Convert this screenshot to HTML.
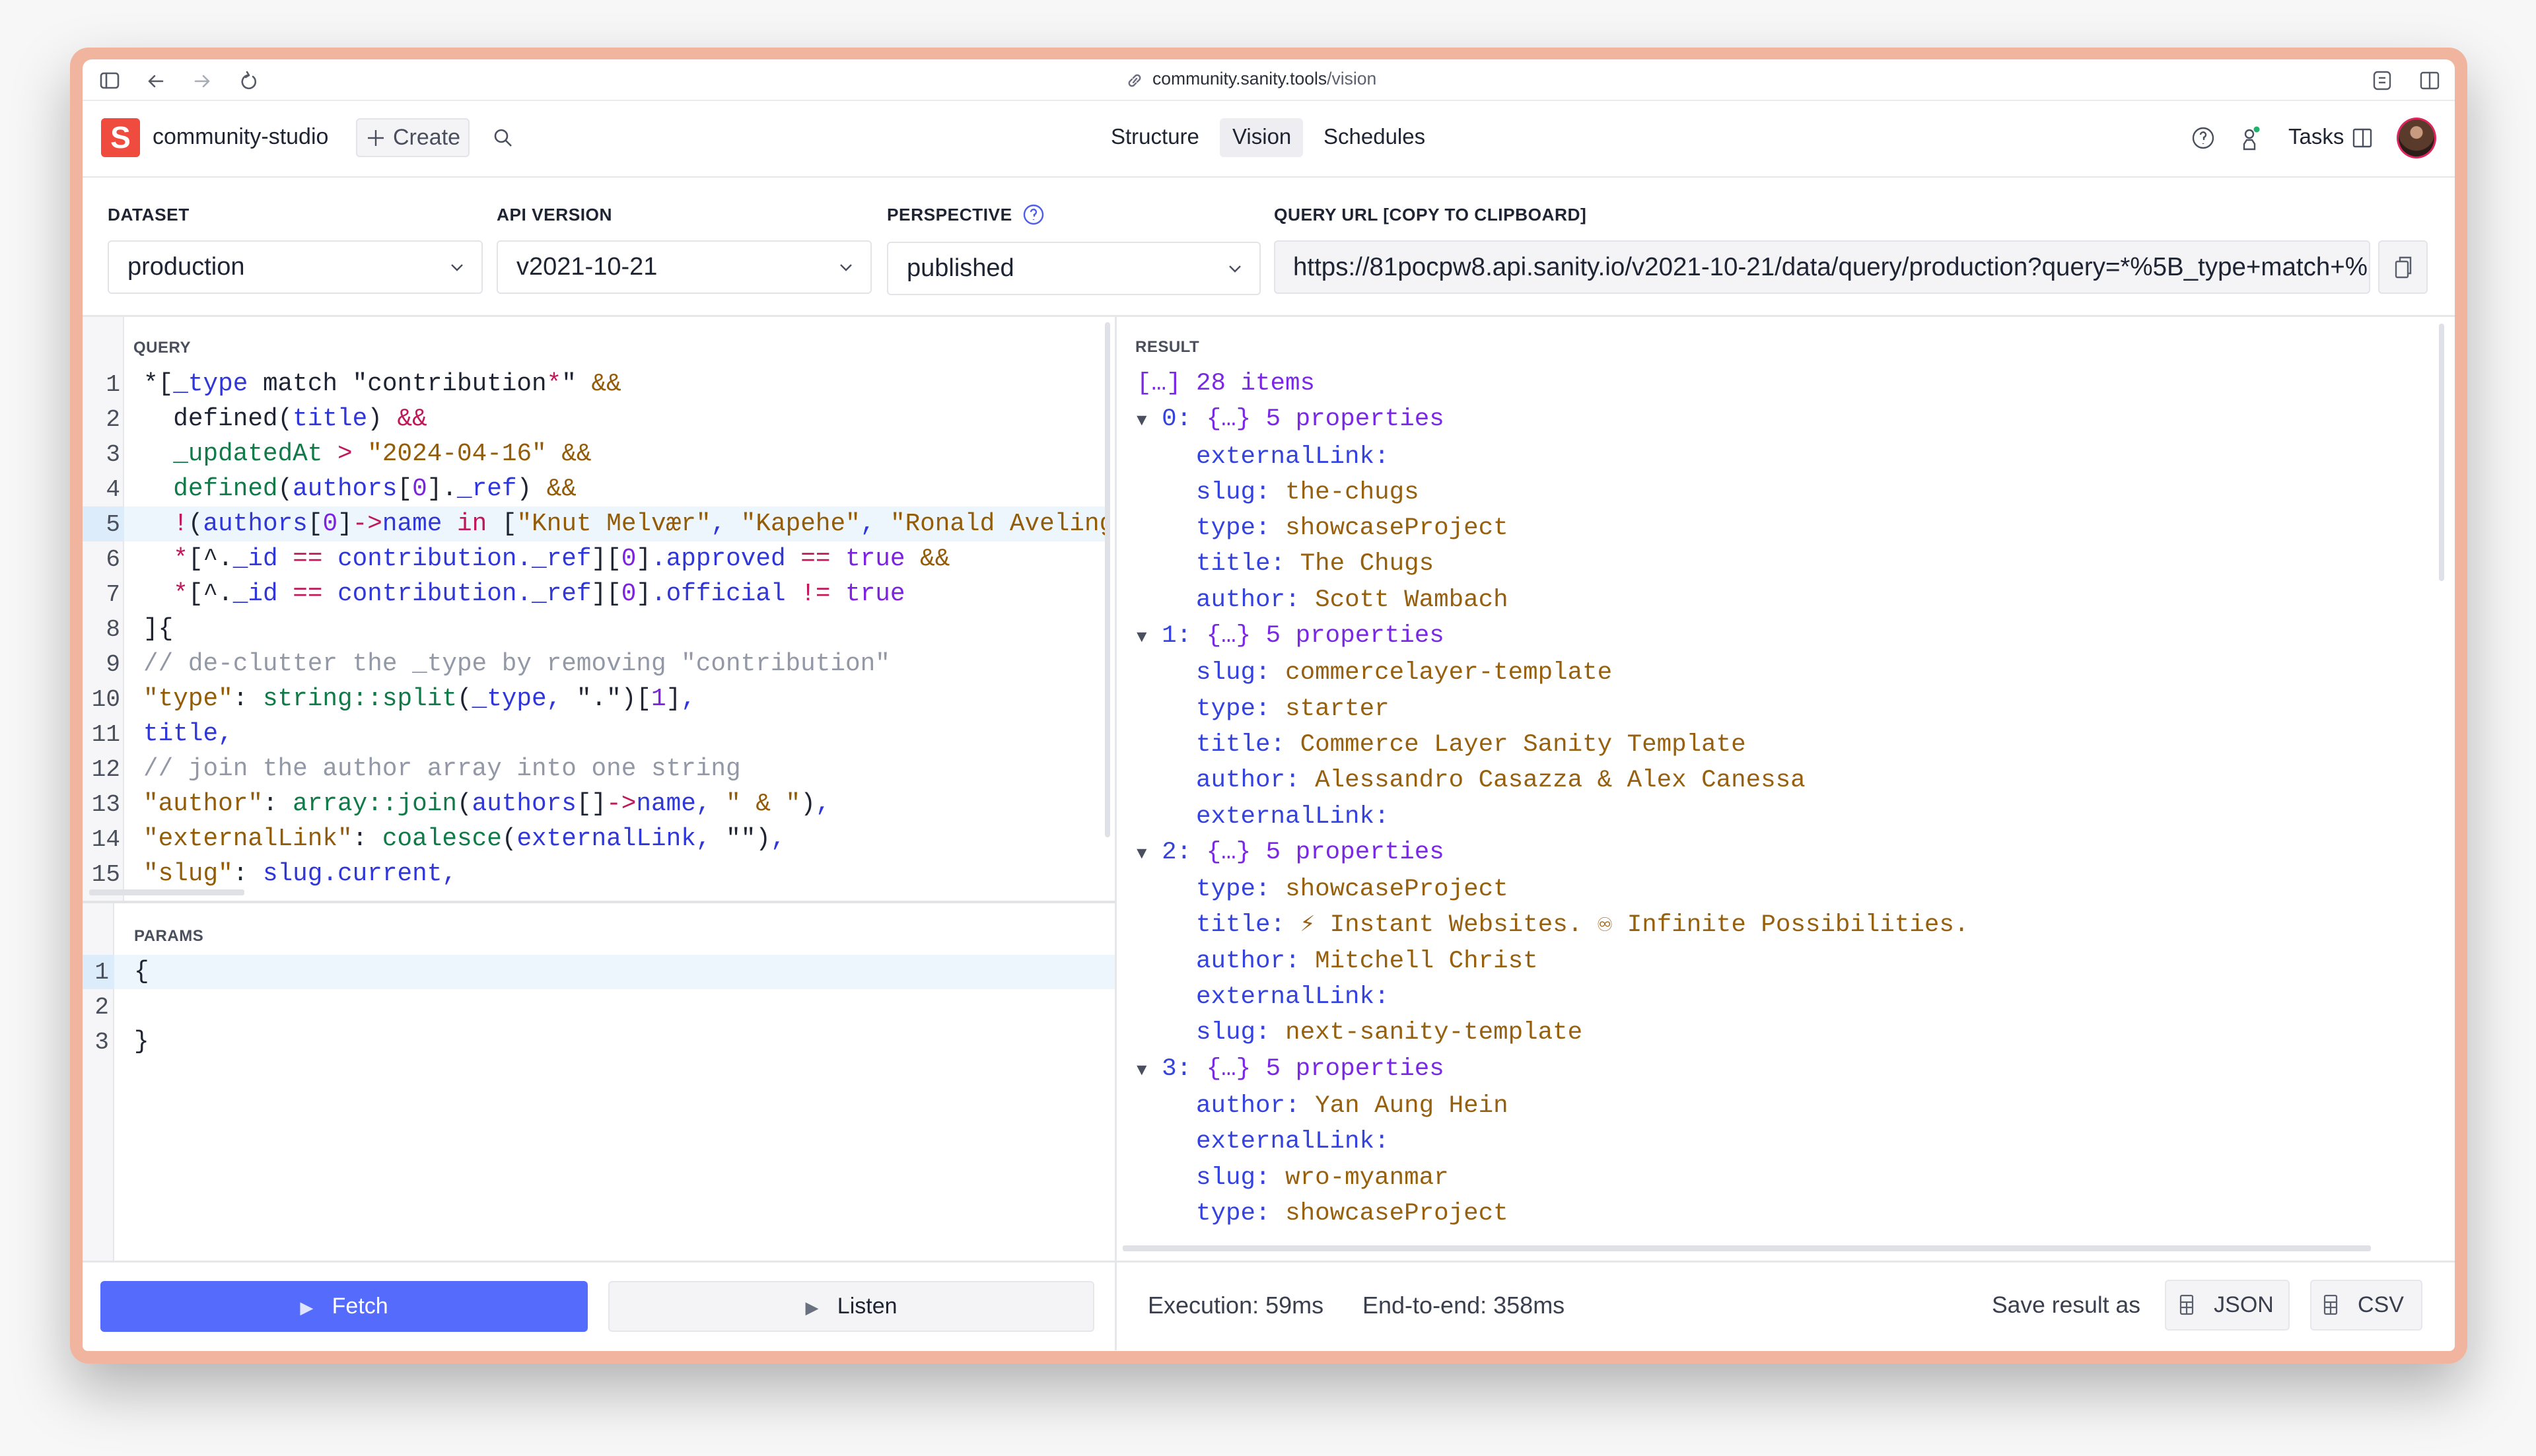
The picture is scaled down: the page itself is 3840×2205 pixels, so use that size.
<!DOCTYPE html>
<html><head><meta charset="utf-8"><style>
*{box-sizing:border-box;margin:0;padding:0}
html,body{width:3840px;height:2205px;overflow:hidden;background:#f7f7f7;font-family:"Liberation Sans",sans-serif;color:#1f2433}
.abs{position:absolute}
.frame{position:absolute;left:106px;top:72px;width:3630px;height:1993px;background:#f1b49e;border-radius:28px;box-shadow:0 40px 90px rgba(0,0,0,0.28)}
.win{position:absolute;left:125px;top:90px;width:3592px;height:1956px;background:#fff;border-radius:14px 14px 8px 8px;overflow:hidden}
.lbl{position:absolute;font-size:26.3px;font-weight:bold;letter-spacing:0.5px;color:#1f2433}
.sel{position:absolute;top:364px;height:81px;border:2px solid #e3e4e8;border-radius:6px;background:#fff;font-size:38px;padding-left:28px;line-height:77px;color:#1f2433}
.chev{position:absolute;right:24px;top:26px}
.code{font-family:"Liberation Mono","DejaVu Sans Mono",monospace;white-space:pre}
.q{position:absolute;left:217px;font-size:37.7px;line-height:53px}
.ln{position:absolute;font-family:"Liberation Mono",monospace;font-size:36px;line-height:53px;text-align:right;color:#4a4f5c}
.d{color:#1f2433}.b{color:#3037d9}.p{color:#7d22e0}.r{color:#c0185a}.s{color:#935c08}.g{color:#117a49}.c{color:#9298a6}
.res{position:absolute;left:1730px;top:554px;font-size:37.5px;line-height:54.3px}
.k{color:#3442e0}.v{color:#96600f}.pu{color:#7a28e6}
.btn{position:absolute;border-radius:6px;font-size:34px;text-align:center}
</style></head><body>
<div class="frame"></div>
<div class="win">
</div>
<!-- browser toolbar -->
<div class="abs" style="left:125px;top:151px;width:3592px;height:2px;background:#ececef"></div>
<svg class="abs" style="left:150px;top:106px" width="250" height="34" viewBox="0 0 250 34" fill="none" stroke="#555a66" stroke-width="2.6" stroke-linecap="round" stroke-linejoin="round">
<rect x="3" y="5" width="26" height="22" rx="4"/><line x1="11" y1="5" x2="11" y2="27"/>
<path d="M96 17H76M84 9l-8 8 8 8"/>
<path d="M146 17h20M158 9l8 8-8 8" stroke="#a8acb6"/>
<path d="M233 10a10 10 0 1 1-8-2M224 3l3 5-5 3"/>
</svg>
<svg class="abs" style="left:1705px;top:108px" width="26" height="28" viewBox="0 0 26 28" fill="none" stroke="#6b7080" stroke-width="2.4" stroke-linecap="round"><path d="M11 17l5-6M9 12l-3 3a4 4 0 0 0 6 6l3-3M17 16l3-3a4 4 0 0 0-6-6l-3 3"/></svg>
<div class="abs" style="left:1745px;top:104px;font-size:26.5px;color:#5c6070"><span style="color:#2b2f3a">community.sanity.tools</span>/vision</div>
<svg class="abs" style="left:3590px;top:104px" width="110" height="36" viewBox="0 0 110 36" fill="none" stroke="#555a66" stroke-width="2.4"><rect x="5" y="5" width="24" height="26" rx="5"/><path d="M12 14h10M12 21h10"/><rect x="76" y="6" width="26" height="24" rx="3"/><line x1="89" y1="6" x2="89" y2="30"/></svg>
<!-- app nav -->
<div class="abs" style="left:125px;top:267px;width:3592px;height:2px;background:#e6e7eb"></div>
<div class="abs" style="left:153px;top:179px;width:59px;height:59px;background:#f04b3f;border-radius:6px;color:#fff;font-size:46px;font-weight:bold;text-align:center;line-height:59px">S</div>
<div class="abs" style="left:231px;top:188px;font-size:34px;color:#1f2433">community-studio</div>
<div class="abs" style="left:539px;top:179px;width:172px;height:59px;background:#f4f4f7;border:2px solid #e3e4e9;border-radius:6px;font-size:34px;color:#4a4f5e;line-height:55px;padding-left:54px">Create</div>
<svg class="abs" style="left:553px;top:193px" width="32" height="32" viewBox="0 0 32 32" stroke="#4a4f5e" stroke-width="2.4"><path d="M16 4v24M4 16h24"/></svg>
<svg class="abs" style="left:744px;top:191px" width="36" height="36" viewBox="0 0 36 36" fill="none" stroke="#4a4f5e" stroke-width="2.6"><circle cx="15" cy="15" r="9"/><path d="M22 22l8 8"/></svg>
<div class="abs" style="left:1682px;top:188px;font-size:33px">Structure</div>
<div class="abs" style="left:1847px;top:179px;width:126px;height:59px;background:#eeeef2;border-radius:6px"></div>
<div class="abs" style="left:1866px;top:188px;font-size:33px">Vision</div>
<div class="abs" style="left:2004px;top:188px;font-size:33px">Schedules</div>
<svg class="abs" style="left:3318px;top:190px" width="120" height="40" viewBox="0 0 120 40" fill="none" stroke="#4a4f5e" stroke-width="2.4"><circle cx="18" cy="19" r="15"/><path d="M14 14a4 4 0 1 1 5 4v4M18 27v1"/><circle cx="88" cy="13" r="6"/><path d="M80 36v-8l4-6h8l4 6v8z"/><circle cx="99" cy="6" r="4.5" fill="#1db36e" stroke="none"/></svg>
<div class="abs" style="left:3465px;top:188px;font-size:33px">Tasks</div>
<svg class="abs" style="left:3561px;top:192px" width="32" height="34" viewBox="0 0 32 34" fill="none" stroke="#4a4f5e" stroke-width="2.4"><rect x="3" y="4" width="26" height="26" rx="2"/><line x1="17" y1="4" x2="17" y2="30"/></svg>
<div class="abs" style="left:3629px;top:178px;width:60px;height:62px;border-radius:50%;border:3px solid #e0245e;background:radial-gradient(circle at 50% 35%,#c89b80 0 20%,#5a3a2a 22% 60%,#2a1d18 62%)"></div>
<!-- labels -->
<div class="lbl" style="left:163px;top:310px">DATASET</div>
<div class="lbl" style="left:752px;top:310px">API VERSION</div>
<div class="lbl" style="left:1343px;top:310px">PERSPECTIVE</div>
<svg class="abs" style="left:1548px;top:307px" width="34" height="36" viewBox="0 0 34 36" fill="none" stroke="#4f5ee8" stroke-width="2.4"><circle cx="17" cy="18" r="14"/><path d="M13 14a4 4 0 1 1 5 4v3M17 25v1"/></svg>
<div class="lbl" style="left:1929px;top:310px">QUERY URL [COPY TO CLIPBOARD]</div>
<div class="sel" style="left:163px;width:568px">production<svg class="chev" width="26" height="26" viewBox="0 0 26 26" fill="none" stroke="#4a4f5e" stroke-width="2.4"><path d="M5 9l8 8 8-8"/></svg></div>
<div class="sel" style="left:752px;width:568px">v2021-10-21<svg class="chev" width="26" height="26" viewBox="0 0 26 26" fill="none" stroke="#4a4f5e" stroke-width="2.4"><path d="M5 9l8 8 8-8"/></svg></div>
<div class="sel" style="left:1343px;width:566px;top:366px">published<svg class="chev" width="26" height="26" viewBox="0 0 26 26" fill="none" stroke="#4a4f5e" stroke-width="2.4"><path d="M5 9l8 8 8-8"/></svg></div>
<div class="sel" style="left:1929px;width:1660px;background:#f4f4f7;overflow:hidden;white-space:nowrap;padding-left:27px;font-size:38.5px">https://81pocpw8.api.sanity.io/v2021-10-21/data/query/production?query=*%5B_type+match+%22contribution*%22</div>
<div class="abs" style="left:3601px;top:364px;width:75px;height:81px;border:2px solid #e3e4e8;border-radius:6px;background:#f4f4f7"></div>
<svg class="abs" style="left:3622px;top:386px" width="34" height="38" viewBox="0 0 34 38" fill="none" stroke="#5a5f6d" stroke-width="2.4"><rect x="6" y="10" width="18" height="24" rx="2"/><path d="M12 10V4h16v24h-4"/></svg>
<div class="abs" style="left:125px;top:477px;width:3592px;height:3px;background:#e6e7eb"></div>
<!-- query panel -->
<div class="abs" style="left:125px;top:480px;width:63px;height:885px;background:#f6f6f8;border-right:2px solid #e6e7eb"></div>
<div class="abs" style="left:1673px;top:488px;width:8px;height:780px;background:#e0e1e6;border-radius:4px"></div>
<div class="abs" style="left:1688px;top:480px;width:3px;height:1565px;background:#e6e7eb"></div>
<div class="abs" style="left:202px;top:513px;font-size:24px;font-weight:bold;color:#4a4f5e;font-family:'Liberation Sans',sans-serif;letter-spacing:0.5px">QUERY</div>
<div class="abs" style="left:125px;top:767px;width:1548px;height:53px;background:#eef6fd"></div>
<div class="abs" style="left:125px;top:767px;width:63px;height:53px;background:#dcecfa"></div>
<div class="ln" style="left:125px;top:556px;width:57px">1<br>2<br>3<br>4<br>5<br>6<br>7<br>8<br>9<br>10<br>11<br>12<br>13<br>14<br>15</div>
<div class="abs" style="left:125px;top:480px;width:1548px;height:870px;overflow:hidden">
<div class="q code" style="left:92px;top:76px"><span class="d">*[</span><span class="b">_type</span><span class="d"> match "contribution</span><span class="r">*</span><span class="d">" </span><span class="s">&amp;&amp;</span>
<span class="d">  defined(</span><span class="b">title</span><span class="d">) </span><span class="r">&amp;&amp;</span>
<span class="g">  _updatedAt</span> <span class="r">&gt;</span> <span class="s">"2024-04-16"</span> <span class="s">&amp;&amp;</span>
<span class="g">  defined</span><span class="d">(</span><span class="b">authors</span><span class="d">[</span><span class="p">0</span><span class="d">].</span><span class="b">_ref</span><span class="d">) </span><span class="s">&amp;&amp;</span>
  <span class="r">!</span><span class="d">(</span><span class="b">authors</span><span class="d">[</span><span class="p">0</span><span class="d">]</span><span class="r">-&gt;</span><span class="b">name</span> <span class="r">in</span> <span class="d">[</span><span class="s">"Knut Melvær"</span><span class="b">,</span> <span class="s">"Kapehe"</span><span class="b">,</span> <span class="s">"Ronald Aveling"</span>
  <span class="r">*</span><span class="d">[^.</span><span class="b">_id</span> <span class="r">==</span> <span class="b">contribution._ref</span><span class="d">][</span><span class="p">0</span><span class="d">]</span><span class="b">.approved</span> <span class="r">==</span> <span class="p">true</span> <span class="s">&amp;&amp;</span>
  <span class="r">*</span><span class="d">[^.</span><span class="b">_id</span> <span class="r">==</span> <span class="b">contribution._ref</span><span class="d">][</span><span class="p">0</span><span class="d">]</span><span class="b">.official</span> <span class="r">!=</span> <span class="p">true</span>
<span class="d">]{</span>
<span class="c">// de-clutter the _type by removing "contribution"</span>
<span class="s">"type"</span><span class="d">: </span><span class="g">string::split</span><span class="d">(</span><span class="b">_type,</span> <span class="d">"."</span><span class="d">)[</span><span class="p">1</span><span class="d">]</span><span class="b">,</span>
<span class="b">title,</span>
<span class="c">// join the author array into one string</span>
<span class="s">"author"</span><span class="d">: </span><span class="g">array::join</span><span class="d">(</span><span class="b">authors</span><span class="d">[]</span><span class="r">-&gt;</span><span class="b">name,</span> <span class="s">" &amp; "</span><span class="d">)</span><span class="b">,</span>
<span class="s">"externalLink"</span><span class="d">: </span><span class="g">coalesce</span><span class="d">(</span><span class="b">externalLink,</span> <span class="d">"")</span><span class="b">,</span>
<span class="s">"slug"</span><span class="d">: </span><span class="b">slug.current,</span></div>
</div>
<div class="abs" style="left:135px;top:1347px;width:235px;height:9px;background:#e0e1e6;border-radius:3px"></div>
<div class="abs" style="left:125px;top:1364px;width:1564px;height:4px;background:#e2e3e7"></div>
<!-- params -->
<div class="abs" style="left:125px;top:1368px;width:48px;height:543px;background:#f6f6f8;border-right:2px solid #e6e7eb"></div>
<div class="abs" style="left:203px;top:1404px;font-size:24px;font-weight:bold;color:#4a4f5e;letter-spacing:0.5px">PARAMS</div>
<div class="abs" style="left:173px;top:1446px;width:1515px;height:52px;background:#eef6fd"></div>
<div class="abs" style="left:125px;top:1446px;width:48px;height:52px;background:#dcecfa"></div>
<div class="ln" style="left:125px;top:1446px;width:40px">1<br>2<br>3</div>
<div class="q code d" style="left:203px;top:1446px">{

}</div>
<!-- result -->
<div class="abs" style="left:1719px;top:512px;font-size:24px;font-weight:bold;color:#4a4f5e;letter-spacing:0.5px">RESULT</div>
<div class="abs" style="left:1691px;top:540px;width:2010px;height:1335px;overflow:hidden">
<div class="res code" style="left:30px;top:14px"><span class="pu">[…] 28 items</span>
<span style="color:#4a4f5e;font-size:26px">▼</span> <span class="k">0:</span> <span class="pu">{…} 5 properties</span>
    <span class="k">externalLink:</span>
    <span class="k">slug:</span> <span class="v">the-chugs</span>
    <span class="k">type:</span> <span class="v">showcaseProject</span>
    <span class="k">title:</span> <span class="v">The Chugs</span>
    <span class="k">author:</span> <span class="v">Scott Wambach</span>
<span style="color:#4a4f5e;font-size:26px">▼</span> <span class="k">1:</span> <span class="pu">{…} 5 properties</span>
    <span class="k">slug:</span> <span class="v">commercelayer-template</span>
    <span class="k">type:</span> <span class="v">starter</span>
    <span class="k">title:</span> <span class="v">Commerce Layer Sanity Template</span>
    <span class="k">author:</span> <span class="v">Alessandro Casazza &amp; Alex Canessa</span>
    <span class="k">externalLink:</span>
<span style="color:#4a4f5e;font-size:26px">▼</span> <span class="k">2:</span> <span class="pu">{…} 5 properties</span>
    <span class="k">type:</span> <span class="v">showcaseProject</span>
    <span class="k">title:</span> <span class="v">⚡ Instant Websites. ♾ Infinite Possibilities.</span>
    <span class="k">author:</span> <span class="v">Mitchell Christ</span>
    <span class="k">externalLink:</span>
    <span class="k">slug:</span> <span class="v">next-sanity-template</span>
<span style="color:#4a4f5e;font-size:26px">▼</span> <span class="k">3:</span> <span class="pu">{…} 5 properties</span>
    <span class="k">author:</span> <span class="v">Yan Aung Hein</span>
    <span class="k">externalLink:</span>
    <span class="k">slug:</span> <span class="v">wro-myanmar</span>
    <span class="k">type:</span> <span class="v">showcaseProject</span>
    <span class="k">title:</span> <span class="v">WRO Myanmar</span></div>
</div>
<div class="abs" style="left:1691px;top:1870px;width:2010px;height:16px;background:#fff"></div>
<div class="abs" style="left:1700px;top:1886px;width:1890px;height:9px;background:#e0e1e6;border-radius:3px"></div>
<div class="abs" style="left:3693px;top:490px;width:8px;height:390px;background:#e0e1e6;border-radius:4px"></div>
<!-- bottom -->
<div class="abs" style="left:125px;top:1909px;width:3592px;height:3px;background:#e6e7eb"></div>
<div class="btn" style="left:152px;top:1940px;width:738px;height:77px;background:#556bfc;color:#fff;line-height:77px"><span style="font-size:26px;color:#dfe4ff">▶</span>&nbsp;&nbsp; Fetch</div>
<div class="btn" style="left:921px;top:1940px;width:736px;height:77px;background:#f4f4f7;border:2px solid #e6e7eb;color:#1f2433;line-height:73px"><span style="font-size:26px;color:#6b7080">▶</span>&nbsp;&nbsp; Listen</div>
<div class="abs" style="left:1738px;top:1956px;font-size:36px;color:#3a3f4d">Execution: 59ms</div>
<div class="abs" style="left:2063px;top:1956px;font-size:36px;color:#3a3f4d">End-to-end: 358ms</div>
<div class="abs" style="left:3016px;top:1956px;font-size:35.5px;color:#3a3f4d">Save result as</div>
<div class="btn" style="left:3278px;top:1938px;width:189px;height:77px;background:#f4f4f7;border:2px solid #e6e7eb;line-height:73px;color:#3a3f4d;padding-left:50px">JSON</div>
<div class="btn" style="left:3498px;top:1938px;width:170px;height:77px;background:#f4f4f7;border:2px solid #e6e7eb;line-height:73px;color:#3a3f4d;padding-left:44px">CSV</div>
<svg class="abs" style="left:3298px;top:1958px" width="26" height="36" viewBox="0 0 26 36" fill="none" stroke="#5a5f6d" stroke-width="2.2"><rect x="4" y="4" width="18" height="28" rx="2"/><path d="M4 14h18M4 22h18M13 14v18"/></svg>
<svg class="abs" style="left:3516px;top:1958px" width="26" height="36" viewBox="0 0 26 36" fill="none" stroke="#5a5f6d" stroke-width="2.2"><rect x="4" y="4" width="18" height="28" rx="2"/><path d="M4 14h18M4 22h18M13 14v18"/></svg>
</body></html>
